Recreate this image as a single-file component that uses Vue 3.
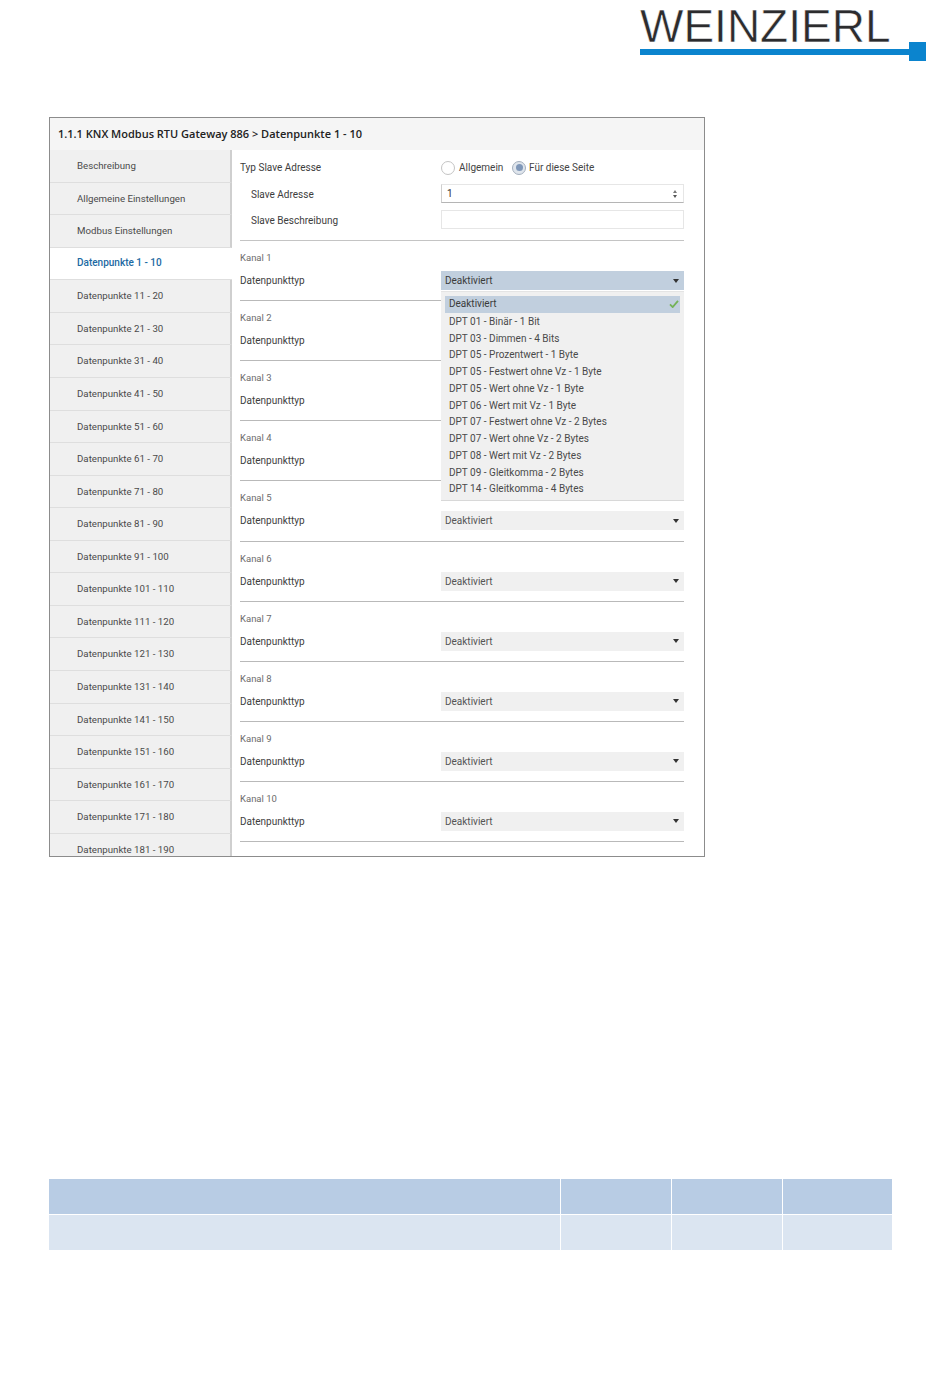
<script setup>
const pages = [
  'Beschreibung', 'Allgemeine Einstellungen', 'Modbus Einstellungen',
]
for (let i = 0; i < 19; i++) {
  pages.push(`Datenpunkte ${i * 10 + 1} - ${i * 10 + 10}`)
}
const activePage = 'Datenpunkte 1 - 10'

const channels = [1, 2, 3, 4, 5, 6, 7, 8, 9, 10]

const options = [
  'DPT 01 - Binär - 1 Bit',
  'DPT 03 - Dimmen - 4 Bits',
  'DPT 05 - Prozentwert - 1 Byte',
  'DPT 05 - Festwert ohne Vz - 1 Byte',
  'DPT 05 - Wert ohne Vz - 1 Byte',
  'DPT 06 - Wert mit Vz - 1 Byte',
  'DPT 07 - Festwert ohne Vz - 2 Bytes',
  'DPT 07 - Wert ohne Vz - 2 Bytes',
  'DPT 08 - Wert mit Vz - 2 Bytes',
  'DPT 09 - Gleitkomma - 2 Bytes',
  'DPT 14 - Gleitkomma - 4 Bytes',
]
</script>

<template>
  <div class="page">
    <!-- Logo -->
    <header class="logo">
      <div class="logo-name">WEINZIERL</div>
      <div class="logo-line">
        <div class="logo-bar"></div>
        <div class="logo-square"></div>
      </div>
    </header>

    <!-- ETS Fenster -->
    <section class="window">
      <div class="window-title">1.1.1 KNX Modbus RTU Gateway 886 &gt; Datenpunkte 1 - 10</div>
      <div class="window-body">
        <nav class="sidebar">
          <div
            v-for="p in pages"
            :key="p"
            class="nav-item"
            :class="{ active: p === activePage }"
          >{{ p }}</div>
        </nav>

        <main class="content">
          <div class="slave">
            <div class="row row-first">
              <span class="label">Typ Slave Adresse</span>
              <div class="radios">
                <span class="radio"></span>
                <span class="radio-text first">Allgemein</span>
                <span class="radio checked"></span>
                <span class="radio-text">Für diese Seite</span>
              </div>
            </div>
            <div class="row row-input">
              <span class="label indent">Slave Adresse</span>
              <div class="field number">
                <span>1</span>
                <span class="spin">
                  <i class="up"></i>
                  <i class="down"></i>
                </span>
              </div>
            </div>
            <div class="row row-input">
              <span class="label indent">Slave Beschreibung</span>
              <div class="field"></div>
            </div>
          </div>

          <div v-for="c in channels" :key="c" class="channel">
            <div class="channel-name">Kanal {{ c }}</div>
            <div class="row">
              <span class="label">Datenpunkttyp</span>
              <div class="select-wrap">
                <!-- Kanal 2-4 liegen komplett unter der offenen Liste -->
                <div v-if="c === 1 || c > 4" class="select" :class="{ open: c === 1 }">
                  <span>Deaktiviert</span>
                  <i class="caret"></i>
                </div>
                <div v-if="c === 1" class="dropdown">
                  <div class="option selected">
                    <span>Deaktiviert</span>
                    <svg class="check" width="10" height="8" viewBox="0 0 11 9">
                      <path d="M1 5 L4 8 L10 1" fill="none" stroke="#74b257" stroke-width="2" />
                    </svg>
                  </div>
                  <div v-for="o in options" :key="o" class="option">{{ o }}</div>
                </div>
              </div>
            </div>
          </div>
        </main>
      </div>
    </section>

    <!-- Tabelle -->
    <div class="table">
      <div class="head wide"></div>
      <div class="head"></div>
      <div class="head"></div>
      <div class="head"></div>
      <div class="cell wide"></div>
      <div class="cell"></div>
      <div class="cell"></div>
      <div class="cell"></div>
    </div>
  </div>
</template>

<style>
body {
  background: #fff;
}
</style>

<style scoped>
.page {
  width: 950px;
  height: 1387px;
  overflow: hidden;
  background: #fff;
  font-family: Roboto, "Open Sans", sans-serif;
  color: #444;
}

.logo {
  width: 286px;
  height: 61px;
  margin-left: 640px;
}
.logo-name {
  font-family: "Liberation Sans", Arial, sans-serif;
  font-size: 46px;
  line-height: 34px;
  padding-top: 9px;
  color: #2c2c2e;
  height: 42px;
  box-sizing: border-box;
  -webkit-text-stroke: 0.5px #fff;
}
.logo-line {
  display: flex;
  align-items: center;
  height: 19px;
}
.logo-bar {
  flex: 1;
  height: 6px;
  background: #0b84ce;
}
.logo-square {
  width: 17px;
  height: 19px;
  background: #0b84ce;
}

.window {
  width: 656px;
  height: 740px;
  margin: 56px 0 0 49px;
  border: 1px solid #8c8c8c;
  box-sizing: border-box;
  display: flex;
  flex-direction: column;
  overflow: hidden;
}
.window-title {
  height: 32px;
  flex-shrink: 0;
  padding-left: 8px;
  background: #f5f5f5;
  font-family: "Open Sans", sans-serif;
  font-size: 11px;
  font-weight: 600;
  line-height: 31px;
  color: #222;
  white-space: nowrap;
}
.window-body {
  flex: 1;
  display: flex;
  min-height: 0;
}

.sidebar {
  width: 182px;
  flex-shrink: 0;
  overflow: hidden;
  background: #f0f0f0;
}
.nav-item {
  height: 32.57px;
  box-sizing: border-box;
  padding-left: 27px;
  font-size: 9.7px;
  line-height: 31px;
  color: #4a4a4a;
  border-bottom: 1px solid #dedede;
  border-right: 2px solid #cfcfcf;
  white-space: nowrap;
}
.nav-item.active {
  background: #fff;
  color: #1c6aa3;
  font-size: 10px;
  font-weight: 500;
  line-height: 30px;
  border-right: 0;
}

.content {
  flex: 1;
  padding: 0 20px 0 8px;
  min-width: 0;
  overflow: hidden;
  font-size: 10px;
}
.slave {
  height: 91px;
  box-sizing: border-box;
  padding-top: 8px;
  border-bottom: 1px solid #c4c4c4;
}
.row {
  display: flex;
  align-items: center;
  justify-content: space-between;
}
.row-first {
  height: 19px;
}
.row-input {
  height: 19px;
  margin-top: 7px;
}
.label {
  color: #3d3d3d;
  white-space: nowrap;
}
.indent {
  padding: 2px 0 0 11px;
}
.radios {
  width: 243px;
  display: flex;
  align-items: center;
}
.radio {
  width: 12px;
  height: 12px;
  border: 1px solid #c4c4c4;
  border-radius: 50%;
  background: #fff;
  flex-shrink: 0;
}
.radio.checked {
  position: relative;
  border-color: #a4afbd;
  background: #dfe5ec;
}
.radio.checked::after {
  content: "";
  position: absolute;
  left: 2.5px;
  top: 2.5px;
  width: 7px;
  height: 7px;
  border-radius: 50%;
  background: #7f97b8;
}
.radio-text {
  margin-left: 3px;
  color: #444;
}
.radio-text.first {
  width: 53px;
  margin-left: 4px;
  flex-shrink: 0;
  white-space: nowrap;
}
.field {
  width: 243px;
  height: 19px;
  box-sizing: border-box;
  border: 1px solid #e6e6e6;
  background: #fff;
}
.field.number {
  display: flex;
  align-items: center;
  justify-content: space-between;
  padding: 0 6px 0 5px;
  border-bottom-color: #b5b5b5;
  border-left-color: #cfcfcf;
  color: #333;
}
.spin {
  display: flex;
  flex-direction: column;
  gap: 2px;
}
.spin i {
  width: 0;
  height: 0;
  border-left: 2.5px solid transparent;
  border-right: 2.5px solid transparent;
}
.spin .up {
  border-bottom: 3px solid #777;
}
.spin .down {
  border-top: 3px solid #555;
}

.channel {
  height: 60.12px;
  box-sizing: border-box;
  padding-top: 10px;
  border-bottom: 1px solid #b9b9b9;
}
.channel-name {
  height: 15px;
  line-height: 14px;
  font-size: 9.5px;
  color: #6c6c6c;
  margin-bottom: 5px;
}
.select-wrap {
  position: relative;
  width: 243px;
  min-height: 19px;
}
.select {
  height: 19px;
  display: flex;
  align-items: center;
  justify-content: space-between;
  padding: 0 4px;
  background: #f0f0f0;
  color: #555;
}
.select.open {
  background: #c1cfde;
  color: #3b3b3b;
}
.caret {
  width: 0;
  height: 0;
  margin-right: 1px;
  border-left: 3.5px solid transparent;
  border-right: 3.5px solid transparent;
  border-top: 4px solid #333;
}
.dropdown {
  position: absolute;
  left: 0;
  right: 0;
  top: 20px;
  z-index: 2;
  height: 210px;
  box-sizing: border-box;
  padding: 4px 4px 0;
  background: #f0f0f0;
  border-top: 1px solid #e4e4e4;
  border-bottom: 1px solid #d8d8d8;
}
.option {
  height: 16.75px;
  line-height: 18px;
  padding-left: 4px;
  color: #4a4a4a;
  white-space: nowrap;
}
.option.selected {
  display: flex;
  align-items: center;
  justify-content: space-between;
  padding-right: 1px;
  background: #c1cfde;
  color: #3b3b3b;
}

.table {
  width: 843px;
  margin: 322px 0 0 49px;
  display: grid;
  grid-template-columns: 511px 110px 110px 109px;
  grid-template-rows: 34.5px 35.5px;
  column-gap: 1px;
  row-gap: 1px;
}
.head {
  background: #b8cce4;
}
.cell {
  background: #dbe5f1;
}
</style>
